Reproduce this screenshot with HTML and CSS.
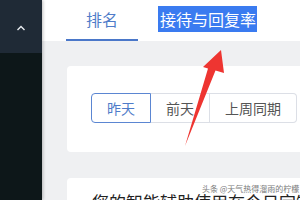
FILE: index.html
```html
<!DOCTYPE html>
<html lang="zh">
<head>
<meta charset="utf-8">
<link rel="stylesheet" href="styles.css">
</head>
<body>
<div class="app">
  <aside class="sidebar">
    <div class="side-top">
      <svg class="chev" width="10" height="6" viewBox="0 0 10 6"><polyline points="1.5,5 5,1.5 8.5,5" fill="none" stroke="#e8ecf0" stroke-width="1.4"/></svg>
    </div>
    <div class="side-bottom"></div>
  </aside>
  <main class="main">
    <header class="tabs">
      <div class="tab active">排名</div>
      <div class="tab"><span class="sel">接待与回复率</span></div>
    </header>
    <section class="content">
      <div class="card">
        <div class="btn-group">
          <div class="btn on">昨天</div>
          <div class="btn">前天</div>
          <div class="btn">上周同期</div>
        </div>
      </div>
      <div class="card card2">
        <p class="desc">您的智能辅助使用在今日定制并且</p>
      </div>
    </section>
  </main>
</div>
<svg class="arrow" width="300" height="200" viewBox="0 0 300 200"><polygon points="221,50 224,73 215.5,70.5 185,146 208,68.5 203,67" fill="#ee3531"/></svg>
<div class="mark">头条 @天气热得溜雨的柠檬</div>
</body>
</html>
```

FILE: styles.css
```css
html, body {
  margin: 0;
  padding: 0;
  width: 300px;
  height: 200px;
  overflow: hidden;
  font-family: "Noto Sans CJK SC", "Noto Sans", sans-serif;
}
.app {
  display: flex;
  height: 200px;
}
.sidebar {
  width: 42px;
  flex: none;
  display: flex;
  flex-direction: column;
  box-shadow: 1px 0 3px rgba(0,0,0,0.25);
  position: relative;
  z-index: 1;
}
.side-top {
  height: 53px;
  background: #1f2a36;
  display: flex;
  justify-content: center;
  padding-top: 25px;
  box-sizing: border-box;
}
.chev {
  display: block;
}
.side-bottom {
  flex: 1;
  background: #0d1719;
}
.main {
  flex: 1;
  background: #eff0f2;
  overflow: hidden;
}
.tabs {
  height: 41px;
  background: #fff;
  display: flex;
  padding-left: 24px;
}
.tab {
  padding: 0 20px;
  font-size: 16px;
  line-height: 38px;
  color: #333;
  border-bottom: 3px solid transparent;
  white-space: nowrap;
}
.tab.active {
  color: #4f7cc9;
  border-bottom: 2px solid #4a77c9;
  height: 39px;
  line-height: 38px;
}
.sel {
  background: #3a7bf0;
  color: #fff;
  padding: 1px 1px 1px 2px;
}
.content {
  padding: 25px 0 0 25px;
}
.card {
  background: #fff;
  border-radius: 4px 0 0 4px;
  padding: 27px 24px 29px;
}
.btn-group {
  display: flex;
}
.btn {
  height: 28px;
  line-height: 28px;
  font-size: 14px;
  color: #555;
  border: 1px solid #dcdfe6;
  border-left: none;
  padding: 0 15px;
  white-space: nowrap;
}
.btn.on {
  color: #4f7cc9;
  border: 1px solid #5b86d2;
  border-radius: 4px 0 0 4px;
}
.btn:last-child {
  border-radius: 0 4px 4px 0;
}
.card2 {
  margin-top: 26px;
  padding: 12px 0 0 25px;
}
.desc {
  margin: 0;
  font-size: 17px;
  line-height: 24px;
  color: #222;
  white-space: nowrap;
}
.arrow {
  position: absolute;
  left: 0;
  top: 0;
  z-index: 5;
}
.mark {
  position: absolute;
  left: 202px;
  top: 184px;
  font-size: 8px;
  line-height: 10px;
  color: #7a7a7a;
  z-index: 6;
  white-space: nowrap;
  text-shadow: 0 0 1px #fff;
}
```
